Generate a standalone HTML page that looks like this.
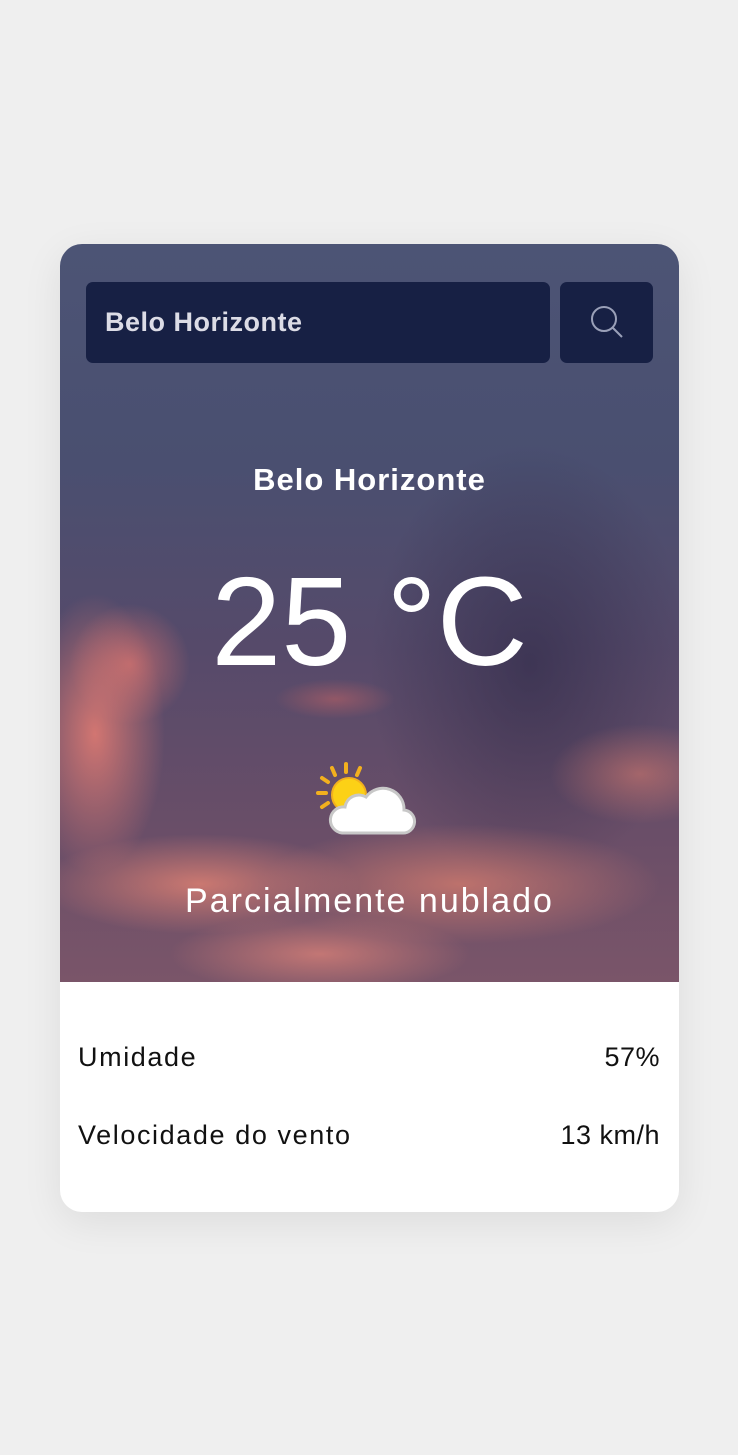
<!DOCTYPE html>
<html><head><meta charset="utf-8"><style>
html,body{margin:0;padding:0}
body{width:738px;height:1455px;background:#efefef;font-family:"Liberation Sans",sans-serif;position:relative;overflow:hidden}
.card{position:absolute;left:60px;top:244px;width:619px;height:968px;border-radius:22px;overflow:hidden;background:#fff;box-shadow:0 10px 40px rgba(0,0,0,0.08)}
.sky{position:absolute;left:0;top:0;width:619px;height:738px;
background:
radial-gradient(ellipse 70px 140px at 35px 490px,rgba(230,125,115,0.85),transparent),
radial-gradient(ellipse 60px 60px at 70px 420px,rgba(220,115,110,0.7),transparent),
radial-gradient(ellipse 160px 50px at 140px 640px,rgba(225,130,115,0.8),transparent),
radial-gradient(ellipse 200px 60px at 400px 640px,rgba(215,125,110,0.75),transparent),
radial-gradient(ellipse 90px 50px at 580px 530px,rgba(210,120,110,0.6),transparent),
radial-gradient(ellipse 150px 40px at 260px 710px,rgba(220,130,120,0.75),transparent),
radial-gradient(ellipse 60px 20px at 275px 455px,rgba(200,100,100,0.5),transparent),
radial-gradient(ellipse 160px 220px at 470px 420px,rgba(45,40,70,0.6),transparent),
linear-gradient(180deg,#4c5475 0%,#4a4f70 30%,#564a6a 55%,#6a4e68 80%,#7a5569 100%)}
.input{position:absolute;left:26px;top:38px;width:464px;height:81px;background:#172044;border-radius:7px;color:#dcdce6;font-weight:bold;font-size:27px;letter-spacing:0.5px;line-height:81px;padding-left:19px;box-sizing:border-box}
.btn{position:absolute;left:500px;top:38px;width:93px;height:81px;background:#172044;border-radius:7px}
.city{position:absolute;left:0;width:619px;top:218px;text-align:center;color:#fff;font-weight:bold;font-size:31px;letter-spacing:1px}
.temp{position:absolute;left:0;width:619px;top:308px;text-align:center;color:#fff;font-size:126px;line-height:140px}
.desc{position:absolute;left:0;width:619px;top:638px;text-align:center;color:#fff;font-size:34px;letter-spacing:2px}
.row{position:absolute;left:18px;right:19px;font-size:27px;color:#111;display:flex;justify-content:space-between;letter-spacing:1.6px}
.row span:last-child{letter-spacing:0.5px}
</style></head><body>
<div class="card">
 <div class="sky"></div>
 <div class="input">Belo Horizonte</div>
 <div class="btn"><svg width="93" height="81" viewBox="0 0 93 81"><circle cx="44" cy="37" r="12" fill="none" stroke="#9aa0b8" stroke-width="2"/><line x1="53" y1="46" x2="62" y2="55" stroke="#9aa0b8" stroke-width="2"/></svg></div>
 <div class="city">Belo Horizonte</div>
 <div class="temp">25 °C</div>
 <svg style="position:absolute;left:256px;top:516px" width="108" height="80" viewBox="0 0 108 80">
  <g stroke="#f2b01e" stroke-width="4" stroke-linecap="round">
   <line x1="30" y1="4" x2="30" y2="12"/><line x1="44" y1="8" x2="41" y2="15"/><line x1="16" y1="8" x2="19" y2="15"/><line x1="6" y1="18" x2="12" y2="22"/><line x1="2" y1="33" x2="10" y2="33"/><line x1="6" y1="47" x2="12" y2="43"/>
  </g>
  <circle cx="33" cy="35" r="17" fill="#fcd116" stroke="#f2b01e" stroke-width="2"/>
  <path d="M26 73 a13 13 0 0 1 3-26 a14 14 0 0 1 21-10 a21 21 0 0 1 38 13 a11.5 11.5 0 0 1 -2 23 z" fill="#fff" stroke="#c8c8c8" stroke-width="3"/>
 </svg>
 <div class="desc">Parcialmente nublado</div>
 <div class="row" style="top:798px"><span>Umidade</span><span>57%</span></div>
 <div class="row" style="top:876px"><span>Velocidade do vento</span><span>13 km/h</span></div>
</div>
</body></html>
